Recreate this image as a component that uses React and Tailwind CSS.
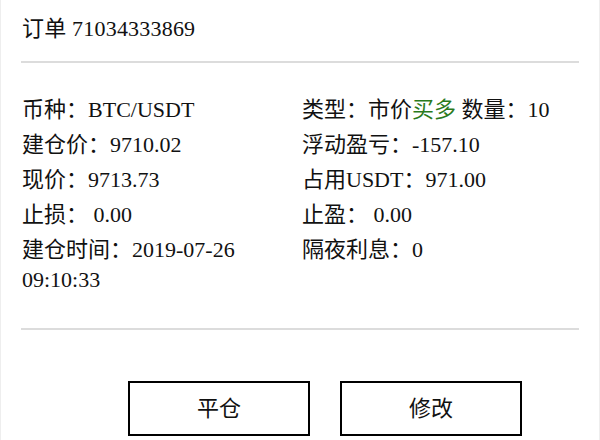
import React from 'react';

const font = { fontFamily: '"Liberation Serif", "Noto Sans CJK SC", serif' };

const rows = [
  [{ label: '币种：', value: 'BTC/USDT' }, { label: '类型：', value: 'type' }],
  [{ label: '建仓价：', value: '9710.02' }, { label: '浮动盈亏：', value: '-157.10' }],
  [{ label: '现价：', value: '9713.73' }, { label: '占用USDT：', value: '971.00' }],
  [{ label: '止损：', value: ' 0.00' }, { label: '止盈：', value: ' 0.00' }],
  [{ label: '建仓时间：', value: '2019-07-26', extra: '09:10:33' }, { label: '隔夜利息：', value: '0' }],
];

function Cell({ item }) {
  if (item.value === 'type') {
    return (
      <div>
        类型：市价<span className="text-[#2b7a1d]">买多</span> 数量：10
      </div>
    );
  }
  return (
    <div className="whitespace-pre">
      <div>
        {item.label}
        {item.value}
      </div>
      {item.extra && <div>{item.extra}</div>}
    </div>
  );
}

export default function App() {
  return (
    <div
      className="w-[600px] h-[440px] bg-white border-x border-[#eeeeee] text-[#111] text-[22px] overflow-hidden"
      style={font}
    >
      <div className="px-[21px] pt-[14px] pb-[18px] leading-[29px] tracking-[0.2px]">订单 71034333869</div>
      <div className="mx-5 h-[2px] bg-[#dcdcdc]" />

      <div className="grid grid-cols-[280px_280px] gap-y-[5px] px-[21px] pt-[32px] pb-[33px] leading-[30px]">
        {rows.map((r, i) => (
          <React.Fragment key={i}>
            <Cell item={r[0]} />
            <Cell item={r[1]} />
          </React.Fragment>
        ))}
      </div>
      <div className="mx-5 h-[2px] bg-[#dcdcdc]" />

      <div className="flex gap-[30px] pl-[127px] pt-[51px]">
        <button className="w-[182px] h-[55px] border-2 border-black bg-white text-[22px]">平仓</button>
        <button className="w-[182px] h-[55px] border-2 border-black bg-white text-[22px]">修改</button>
      </div>
    </div>
  );
}
